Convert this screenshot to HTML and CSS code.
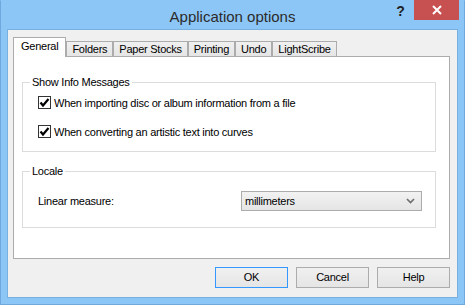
FILE: index.html
```html
<!DOCTYPE html>
<html>
<head>
<meta charset="utf-8">
<link rel="stylesheet" href="styles.css">
</head>
<body>
<div class="window">
  <div class="titlebar">
    <div class="tb-spacer"></div>
    <div class="title">Application options</div>
    <div class="caption-btns">
      <div class="cap-help">?</div>
      <div class="cap-close">
        <svg width="10" height="10" viewBox="0 0 10 10"><path d="M1 1 L9 9 M9 1 L1 9" stroke="#fff" stroke-width="2" fill="none"/></svg>
      </div>
    </div>
  </div>
  <div class="client">
    <div class="tabs">
      <div class="tab selected">General</div>
      <div class="tab">Folders</div>
      <div class="tab">Paper Stocks</div>
      <div class="tab">Printing</div>
      <div class="tab">Undo</div>
      <div class="tab">LightScribe</div>
    </div>
    <div class="panel">
      <fieldset class="group group-info">
        <legend>Show Info Messages</legend>
        <label class="check-row">
          <span class="checkbox"><svg width="11" height="11" viewBox="0 0 11 11"><path d="M1.5 5.5 L4 8.5 L9.5 2" stroke="#000" stroke-width="2.2" fill="none"/></svg></span>
          <span>When importing disc or album information from a file</span>
        </label>
        <label class="check-row second">
          <span class="checkbox"><svg width="11" height="11" viewBox="0 0 11 11"><path d="M1.5 5.5 L4 8.5 L9.5 2" stroke="#000" stroke-width="2.2" fill="none"/></svg></span>
          <span>When converting an artistic text into curves</span>
        </label>
      </fieldset>
      <fieldset class="group group-locale">
        <legend>Locale</legend>
        <div class="field-row">
          <span class="field-label">Linear measure:</span>
          <div class="combo">
            <span>millimeters</span>
            <svg width="9" height="6" viewBox="0 0 9 6"><path d="M1 1 L4.5 4.5 L8 1" stroke="#6d6d6d" stroke-width="1.6" fill="none"/></svg>
          </div>
        </div>
      </fieldset>
    </div>
    <div class="buttons">
      <div class="btn default">OK</div>
      <div class="btn">Cancel</div>
      <div class="btn">Help</div>
    </div>
  </div>
</div>
</body>
</html>
```
FILE: styles.css
```css
* { box-sizing: border-box; }
html, body { margin: 0; padding: 0; }
body {
  width: 465px;
  height: 305px;
  overflow: hidden;
  font-family: "Liberation Sans", Arial, sans-serif;
  font-size: 11px;
  letter-spacing: -0.25px;
  color: #000;
}
.window {
  width: 465px;
  height: 305px;
  background: #8cc6f6;
  border: 1px solid #6fa8dc;
  border-top-color: #8cc6f6;
  padding: 0 6px 6px 6px;
}
.titlebar {
  height: 28px;
  display: grid;
  grid-template-columns: 1fr auto 1fr;
  align-items: start;
}
.title {
  font-size: 15px;
  letter-spacing: 0;
  color: #2b2b2b;
  line-height: 15px;
  padding-top: 8px;
}
.caption-btns {
  display: flex;
  justify-content: flex-end;
  margin-top: -1px;
}
.cap-help {
  width: 27px;
  height: 20px;
  font-size: 14px;
  font-weight: bold;
  letter-spacing: 0;
  color: #1e1e1e;
  text-align: center;
  line-height: 22px;
}
.cap-close {
  width: 45px;
  height: 20px;
  background: #c75050;
  display: flex;
  align-items: center;
  justify-content: center;
  margin-right: -1px;
}
.client {
  height: 269px;
  background: #f0f0f0;
  border: 1px solid #78b0e2;
  padding: 7px 7px 0 5px;
}
.tabs {
  display: flex;
  align-items: flex-end;
  height: 19px;
  position: relative;
  z-index: 1;
}
.tab {
  height: 15px;
  line-height: 14px;
  padding: 0 5px;
  border: 1px solid #acacac;
  border-bottom: none;
  background: linear-gradient(#f0f0f0, #e5e5e5);
  white-space: nowrap;
}
.tab.selected {
  height: 20px;
  margin-bottom: -1px;
  background: #fff;
  padding: 0 7px;
  line-height: 16px;
}
.panel {
  height: 203px;
  background: #fff;
  border: 1px solid #acacac;
  padding: 0 13px 0 8px;
}
.group {
  margin: 19px 0 0 0;
  border: 1px solid #dcdcdc;
  padding: 7px 0 13px 7px;
  min-width: 0;
}
.group legend {
  padding: 0 2px;
  line-height: 13px;
  color: #000;
}
.group-info { margin-top: 19px; }
.group-locale { margin-top: 13px; padding-top: 13px; padding-bottom: 16px; }
.check-row {
  display: flex;
  align-items: center;
  height: 13px;
  margin-left: 8px;
  gap: 3px;
}
.check-row.second { margin-top: 16px; }
.checkbox {
  width: 13px;
  height: 13px;
  border: 1px solid #333;
  background: #fff;
  display: flex;
  align-items: center;
  justify-content: center;
}
.field-row {
  display: flex;
  align-items: center;
  margin-left: 8px;
}
.field-label { width: 203px; }
.combo {
  width: 181px;
  height: 20px;
  border: 1px solid #acacac;
  background: linear-gradient(#f2f2f2, #e5e5e5);
  display: flex;
  align-items: center;
  justify-content: space-between;
  padding: 0 6px 0 3px;
}
.buttons {
  display: flex;
  justify-content: flex-end;
  gap: 8px;
  margin-top: 8px;
}
.btn {
  width: 73px;
  height: 21px;
  border: 1px solid #acacac;
  background: linear-gradient(#f0f0f0, #e5e5e5);
  text-align: center;
  line-height: 19px;
}
.btn.default { border-color: #3399ff; }
```
